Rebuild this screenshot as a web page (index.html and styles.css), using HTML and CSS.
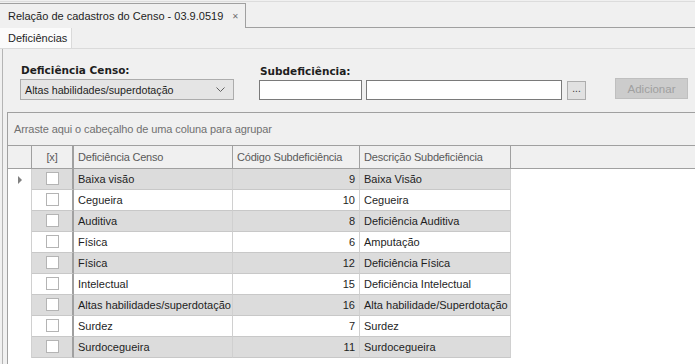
FILE: index.html
```html
<!DOCTYPE html>
<html>
<head>
    <title>Relação de cadastros do Censo</title>
    <link rel="stylesheet" href="styles.css">
</head>
<body>
    <div class="doc-tabs">
        <div class="doc-tab">
            <span>Relação de cadastros do Censo - 03.9.0519</span>
            <span class="close">&#x2715;</span>
        </div>
        <div class="doc-fill"></div>
    </div>
    <div class="page-tabs">
        <div class="page-tab">Deficiências</div>
    </div>
    <div class="panel">
        <div class="filters">
            <div class="field field-def">
                <label>Deficiência Censo:</label>
                <div class="combo">
                    <span>Altas habilidades/superdotação</span>
                    <svg width="9" height="5" viewBox="0 0 9 5"><path d="M0.5 0.5 L4.5 4.5 L8.5 0.5" fill="none" stroke="#606060" stroke-width="1"/></svg>
                </div>
            </div>
            <div class="field">
                <label>Subdeficiência:</label>
                <div class="inputs">
                    <input type="text" class="code-input">
                    <input type="text" class="desc-input">
                    <button class="dots">...</button>
                </div>
            </div>
            <button class="add-button" disabled>Adicionar</button>
        </div>

        <div class="grid">
            <div class="group-panel">Arraste aqui o cabeçalho de uma coluna para agrupar</div>
            <div class="grid-header">
                <div class="cell ind"></div>
                <div class="cell chk">[x]</div>
                <div class="cell def">Deficiência Censo</div>
                <div class="cell cod">Código Subdeficiência</div>
                <div class="cell desc">Descrição Subdeficiência</div>
                <div class="cell rest"></div>
            </div>
            <div class="grid-body" id="gridBody"></div>
        </div>
    </div>
    <script>
        const rows = [
            ["Baixa visão", 9, "Baixa Visão"],
            ["Cegueira", 10, "Cegueira"],
            ["Auditiva", 8, "Deficiência Auditiva"],
            ["Física", 6, "Amputação"],
            ["Física", 12, "Deficiência Física"],
            ["Intelectual", 15, "Deficiência Intelectual"],
            ["Altas habilidades/superdotação", 16, "Alta habilidade/Superdotação"],
            ["Surdez", 7, "Surdez"],
            ["Surdocegueira", 11, "Surdocegueira"]
        ];

        const body = document.getElementById('gridBody');
        rows.forEach((r, i) => {
            const row = document.createElement('div');
            row.classList.add('grid-row');
            if (i % 2 === 0) row.classList.add('alt');
            row.innerHTML = `
                <div class="cell ind">${i === 0 ? '<span class="arrow"></span>' : ''}</div>
                <div class="cell chk"><span class="box"></span></div>
                <div class="cell def">${r[0]}</div>
                <div class="cell cod">${r[1]}</div>
                <div class="cell desc">${r[2]}</div>
            `;
            body.appendChild(row);
        });
    </script>
</body>
</html>
```

FILE: styles.css
```css
body {
    margin: 0;
    background-color: #f0f0f0;
    font-family: 'Liberation Sans', Arial, sans-serif;
    font-size: 11px;
    color: #1e1e1e;
    height: 364px;
    overflow: hidden;
    white-space: nowrap;
}
.doc-tabs {
    display: flex;
    height: 27px;
    border-top: 1px solid #dcdcdc;
    margin-top: 1px;
    box-sizing: border-box;
}
.doc-tab {
    display: flex;
    align-items: center;
    width: 246px;
    margin-top: 1px;
    padding-left: 8px;
    box-sizing: border-box;
    border-top: 1px solid #a0a0a0;
    border-right: 1px solid #a0a0a0;
    font-size: 11px;
    color: #1e1e1e;
}
.doc-tab .close {
    margin-left: auto;
    margin-right: 6px;
    font-size: 8px;
    color: #707070;
}
.doc-fill {
    flex-grow: 1;
    border-bottom: 1px solid #a0a0a0;
}
.page-tabs {
    display: flex;
    height: 21px;
    border-bottom: 1px solid #dadada;
    box-sizing: border-box;
}
.page-tab {
    width: 72px;
    padding-left: 8px;
    box-sizing: border-box;
    line-height: 20px;
    font-size: 11px;
    background-color: #fbfbfb;
    border-right: 1px solid #dadada;
}
.panel {
    margin-left: 2px;
    border-left: 1px solid #b4b4b4;
    height: 316px;
}
.filters {
    display: flex;
    align-items: flex-end;
    height: 63px;
    padding-left: 17px;
    box-sizing: border-box;
    padding-bottom: 12px;
}
.field {
    display: flex;
    flex-direction: column;
}
.field label {
    font-family: Tahoma, 'DejaVu Sans', sans-serif;
    font-weight: bold;
    font-size: 10.5px;
    height: 15px;
    padding-left: 1px;
    color: #1e1e1e;
}
.field-def {
    margin-right: 25px;
}
.combo {
    display: flex;
    align-items: center;
    justify-content: space-between;
    width: 214px;
    height: 21px;
    padding: 0 8px 0 4px;
    box-sizing: border-box;
    background-color: #e5e5e5;
    border: 1px solid #acacac;
    font-size: 10.7px;
}
.inputs {
    display: flex;
    align-items: center;
}
.inputs input {
    height: 20px;
    box-sizing: border-box;
    border: 1px solid #7a7a7a;
    background-color: #fff;
    margin: 0;
    padding: 0;
}
.code-input {
    width: 103px;
    margin-right: 4px !important;
}
.desc-input {
    width: 196px;
}
.dots {
    width: 19px;
    height: 19px;
    margin-left: 5px;
    padding: 0 0 4px 0;
    border: 1px solid #adadad;
    background-color: #e1e1e1;
    font-size: 10px;
    color: #333;
}
.add-button {
    width: 73px;
    height: 21px;
    margin-left: 29px;
    margin-bottom: 1px;
    padding: 0;
    border: 1px solid #bfbfbf;
    background-color: #cccccc;
    color: #a0a0a0;
    font-family: 'Liberation Sans', Arial, sans-serif;
    font-size: 11.5px;
}
.grid {
    margin-left: 4px;
    border-left: 1px solid #a0a0a0;
    border-top: 1px solid #a0a0a0;
    background-color: #fff;
    height: 260px;
}
.group-panel {
    height: 32px;
    line-height: 32px;
    padding-left: 6px;
    background-color: #f0f0f0;
    border-bottom: 1px solid #a0a0a0;
    font-size: 11px;
    letter-spacing: -0.1px;
    color: #707070;
}
.grid-header {
    display: flex;
    height: 22px;
    background-color: #f0f0f0;
    border-bottom: 1px solid #a0a0a0;
    color: #5a5a5a;
}
.grid-header .cell {
    line-height: 22px;
    border-right: 1px solid #a0a0a0;
    letter-spacing: -0.2px;
}
.grid-header .cod {
    text-align: left;
}
.grid-header .rest {
    flex-grow: 1;
    border-right: none;
}
.cell {
    box-sizing: border-box;
    padding: 0 4px;
    overflow: hidden;
    border-right: 1px solid #d0d0d0;
}
.ind {
    width: 24px;
}
.chk {
    width: 42px;
    text-align: center;
    border-right: 2px solid #a0a0a0 !important;
}
.def {
    width: 159px;
}
.cod {
    width: 127px;
    text-align: right;
}
.desc {
    width: 151px;
}
.grid-row {
    display: flex;
    height: 21px;
}
.grid-row .cell {
    line-height: 20px;
    border-bottom: 1px solid #c8c8c8;
    font-family: Tahoma, 'Liberation Sans', sans-serif;
    font-size: 11px;
}
.grid-row .ind {
    border-bottom: none;
    border-right: 1px solid #d0d0d0;
    background-color: #fff;
    position: relative;
}
.grid-row.alt .cell:not(.ind) {
    background-color: #dcdcdc;
}
.arrow {
    position: absolute;
    left: 10px;
    top: 7px;
    border-left: 4px solid #808080;
    border-top: 4px solid transparent;
    border-bottom: 4px solid transparent;
}
.box {
    display: inline-block;
    width: 13px;
    height: 13px;
    box-sizing: border-box;
    margin-top: 3px;
    vertical-align: top;
    background-color: #fff;
    border: 1px solid #b4b4b4;
}
```
